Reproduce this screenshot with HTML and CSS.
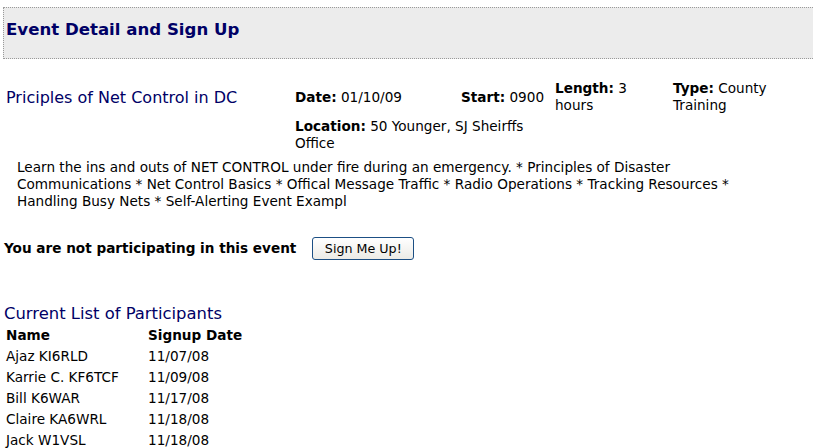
FILE: index.html
```html
<!DOCTYPE html>
<html>
<head>
<meta charset="utf-8">
<title>Event Detail and Sign Up</title>
<link rel="stylesheet" href="styles.css">
</head>
<body>
<div class="page-header">
  <h1 class="page-title">Event Detail and Sign Up</h1>
</div>

<div class="event-grid">
  <div class="event-name">Priciples of Net Control in DC</div>
  <div class="field"><b>Date:</b> 01/10/09</div>
  <div class="field"><b>Start:</b> 0900</div>
  <div class="field length"><b>Length:</b> 3 hours</div>
  <div class="field type"><b>Type:</b> County Training</div>
  <div class="field location"><b>Location:</b> 50 Younger, SJ Sheirffs Office</div>
</div>

<p class="description">Learn the ins and outs of NET CONTROL under fire during an emergency. * Principles of Disaster<br>Communications * Net Control Basics * Offical Message Traffic * Radio Operations * Tracking Resources *<br>Handling Busy Nets * Self-Alerting Event Exampl</p>

<div class="signup-row">
  <span class="status">You are not participating in this event</span>
  <button class="signup-btn" type="button">Sign Me Up!</button>
</div>

<h2 class="section-title">Current List of Participants</h2>
<table class="participants">
  <thead>
    <tr><th class="col-name">Name</th><th>Signup Date</th></tr>
  </thead>
  <tbody>
    <tr><td>Ajaz KI6RLD</td><td>11/07/08</td></tr>
    <tr><td>Karrie C. KF6TCF</td><td>11/09/08</td></tr>
    <tr><td>Bill K6WAR</td><td>11/17/08</td></tr>
    <tr><td>Claire KA6WRL</td><td>11/18/08</td></tr>
    <tr><td>Jack W1VSL</td><td>11/18/08</td></tr>
  </tbody>
</table>
</body>
</html>
```

FILE: styles.css
```css
html, body {
  margin: 0;
  padding: 0;
  background: #ffffff;
}

body {
  font-family: "DejaVu Sans", Verdana, sans-serif;
  font-size: 13.6px;
  line-height: 17px;
  color: #000000;
}

.page-header {
  margin: 7px 0 0 3px;
  height: 52px;
  background: #ececec;
  border: 1px dotted #9a9a9a;
  border-right: none;
  box-sizing: border-box;
  padding: 12px 0 0 2px;
}

.page-title {
  margin: 0;
  font-size: 16.6px;
  line-height: 20px;
  font-weight: bold;
  color: #000066;
}

.event-grid {
  display: grid;
  grid-template-columns: 289px 166px 94px 118px 1fr;
  grid-template-rows: 34px 34px;
  row-gap: 4px;
  align-items: center;
  margin: 21px 0 0 6px;
}

.event-name {
  font-size: 16px;
  color: #000066;
}

.length {
  width: 104px;
}

.type {
  width: 118px;
}

.location {
  grid-column: 2 / 4;
  width: 255px;
}

.description {
  margin: 7px 0 0 17px;
  white-space: nowrap;
}

.signup-row {
  display: flex;
  align-items: center;
  gap: 16px;
  margin: 27px 0 0 4px;
}

.status {
  font-weight: bold;
}

.signup-btn {
  font-family: "DejaVu Sans", Verdana, sans-serif;
  font-size: 12.7px;
  height: 23px;
  width: 102px;
  padding: 0;
  border: 1px solid #1c4f84;
  border-radius: 3px;
  background: linear-gradient(#ffffff, #ecebe6);
  color: #000000;
}

.section-title {
  margin: 44px 0 1px 4px;
  font-size: 16.4px;
  line-height: 20px;
  font-weight: normal;
  color: #000066;
}

.participants {
  border-collapse: collapse;
  margin-left: 3px;
}

.participants th,
.participants td {
  padding: 2px 3px 2px 3px;
  text-align: left;
  height: 17px;
}

.participants th {
  font-weight: bold;
}

.participants .col-name {
  width: 136px;
}
```
